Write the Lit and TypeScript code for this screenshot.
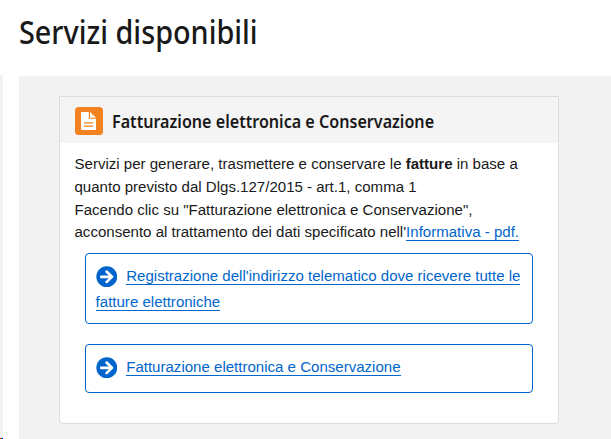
import { LitElement, html, css } from "lit";
import { customElement, property } from "lit/decorators.js";

@customElement("service-link")
class ServiceLink extends LitElement {
  @property() label = "";
  static styles = css`
    :host { display: block; box-sizing: border-box; border: 1px solid #06c; border-radius: 4px; padding: 9px 10px 0 9.6px; line-height: 26px; }
    .icon { width: 21.6px; height: 21.6px; vertical-align: -6.4px; margin-right: 9px; }
    .link { color: #06c; text-decoration: none; box-shadow: inset 0 -1px #06c; padding-bottom: 1px; }
  `;
  render() {
    return html`<svg class="icon" viewBox="0 0 512 512"><path fill="#06c" d="M256 8c137 0 248 111 248 248S393 504 256 504 8 393 8 256 119 8 256 8zm-28.900 143.600l75.500 72.400H120c-13.300 0-24 10.700-24 24v16c0 13.300 10.700 24 24 24h182.600l-75.500 72.400c-9.700 9.300-9.900 24.800-.4 34.300l11 10.900c9.400 9.400 24.600 9.400 33.900 0L404.300 273c9.400-9.400 9.400-24.600 0-33.900L271.600 106.300c-9.400-9.400-24.600-9.400-33.900 0l-11 10.900c-9.500 9.600-9.300 25.100.4 34.400z"/></svg><a class="link" href="#">${this.label}</a>`;
  }
}

@customElement("app-root")
class AppRoot extends LitElement {
  static styles = css`
    :host { display: block; box-sizing: border-box; width: 611px; height: 439px; overflow: hidden; background: #fff; color: #19191a; font: 15.05px/22.8px "Liberation Sans", Arial, sans-serif; }
    .title { margin: 0; height: 75px; box-sizing: border-box; padding: 8px 0 0 19px; font: 500 32px/48px "Noto Sans", sans-serif; white-space: nowrap; }
    .title span, .name span { display: inline-block; transform-origin: 0 50%; }
    .title span { transform: scaleX(.9); }
    .columns { display: grid; grid-template-columns: 3px 592px; column-gap: 16px; height: 364px; }
    .side { background: #f2f2f2; display: flex; align-items: flex-end; }
    .dot { width: 1px; height: 1px; }
    .r { background: #f00; } .g { background: #080; } .b { background: #00f; }
    .panel { background: #f2f2f2; margin-top: 1px; padding: 20px 0 0 40px; }
    .card { box-sizing: border-box; width: 500px; height: 328px; border: 1px solid #dcdcdc; border-radius: 0 0 4px 4px; background: #fff; }
    .head { height: 46px; box-sizing: border-box; background: #f4f4f4; display: flex; padding: 10px 15px 0; gap: 9px; }
    .badge { width: 28px; height: 28px; flex: none; }
    .name { margin: 0; font: 600 18px/28px "Noto Sans", sans-serif; white-space: nowrap; }
    .name span { transform: scaleX(.895); }
    .copy { margin: 0; padding: 10px 0 0 14.5px; height: 110px; box-sizing: border-box; white-space: nowrap; }
    .copy a { color: #06c; text-decoration: none; box-shadow: inset 0 -1px #06c; padding-bottom: 1px; }
    .links { display: flex; flex-direction: column; gap: 20px; padding: 0 25px; }
    .tall { height: 71px; }
    .short { height: 49px; }
  `;
  render() {
    return html`
      <h1 class="title"><span>Servizi disponibili</span></h1>
      <div class="columns">
        <div class="side"><i class="dot r"></i><i class="dot g"></i><i class="dot b"></i></div>
        <div class="panel">
          <section class="card">
            <header class="head">
              <svg class="badge" viewBox="0 0 28 28"><rect width="28" height="28" rx="3.5" fill="#f58220"/><path d="M7 5H13.800V11.800H21V22Q21 23 20 23H7Q6 23 6 22V6Q6 5 7 5Z" fill="#fff"/><path d="M15 5L21 10.800H15Z" fill="#fff"/><path d="M9 15.800H18M9 19.200H18" stroke="#f58220" stroke-width="1.200"/></svg>
              <h2 class="name"><span>Fatturazione elettronica e Conservazione</span></h2>
            </header>
            <p class="copy">Servizi per generare, trasmettere e conservare le <b>fatture</b> in base a<br>quanto previsto dal Dlgs.127/2015 - art.1, comma 1<br>Facendo clic su "Fatturazione elettronica e Conservazione",<br>acconsento al trattamento dei dati specificato nell'<a href="#">Informativa - pdf.</a></p>
            <div class="links">
              <service-link class="tall" label="Registrazione dell'indirizzo telematico dove ricevere tutte le fatture elettroniche"></service-link>
              <service-link class="short" label="Fatturazione elettronica e Conservazione"></service-link>
            </div>
          </section>
        </div>
      </div>`;
  }
}
